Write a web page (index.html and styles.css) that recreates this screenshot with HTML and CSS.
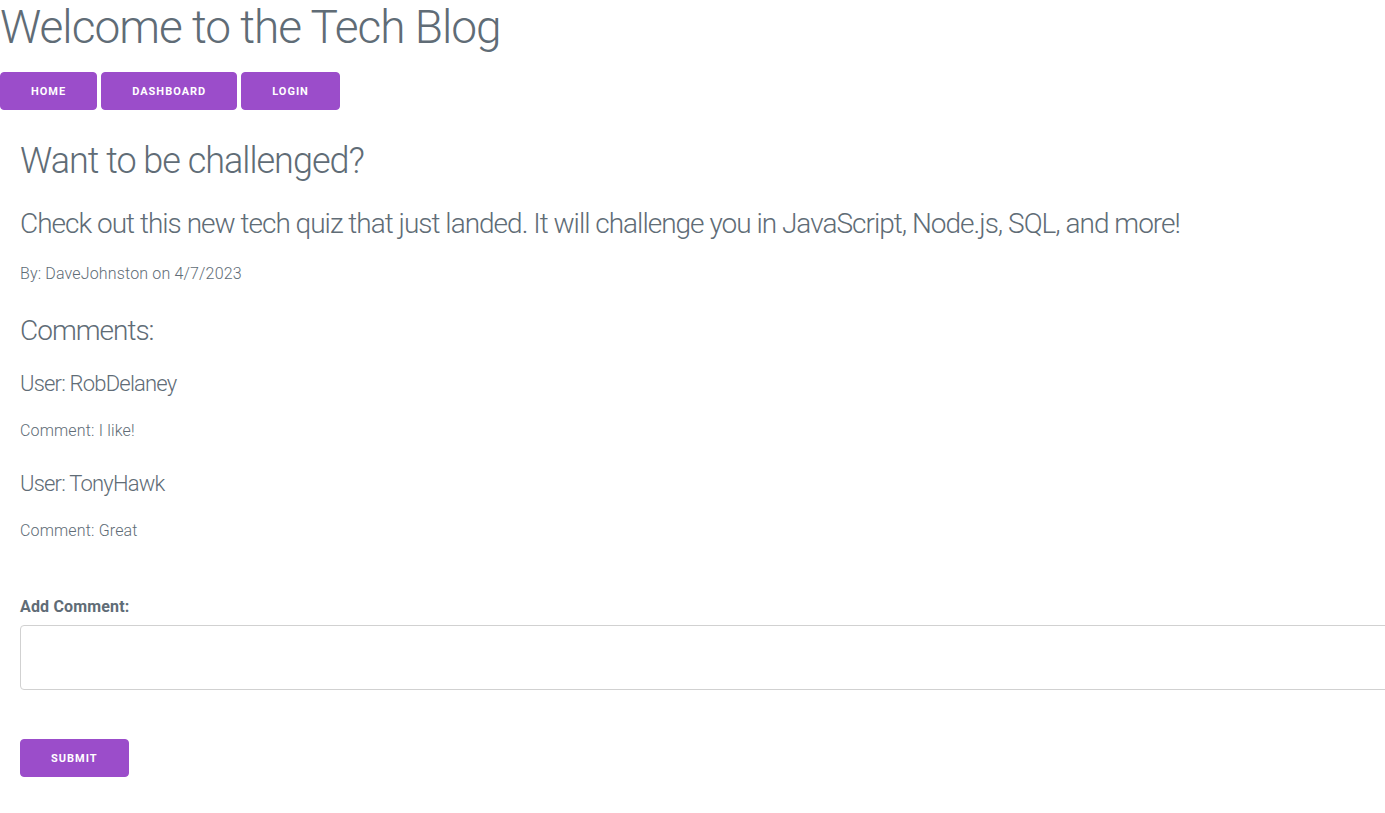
FILE: index.html
```html
<!DOCTYPE html>
<html lang="en">
<head>
<meta charset="utf-8">
<title>Tech Blog</title>
<link rel="stylesheet" href="styles.css">
</head>
<body>
<header class="site-header">
  <h1 class="site-title">Welcome to the Tech Blog</h1>
  <nav class="nav">
    <a class="button" href="#">Home</a>
    <a class="button" href="#">Dashboard</a>
    <a class="button" href="#">Login</a>
  </nav>
</header>
<main class="post">
  <h2 class="post-title">Want to be challenged?</h2>
  <p class="post-body">Check out this new tech quiz that just landed. It will challenge you in JavaScript, Node.js, SQL, and more!</p>
  <p class="post-meta">By: DaveJohnston on 4/7/2023</p>
  <h3 class="comments-heading">Comments:</h3>
  <div class="comment">
    <h4 class="comment-user">User: RobDelaney</h4>
    <p class="comment-text">Comment: I like!</p>
  </div>
  <div class="comment">
    <h4 class="comment-user">User: TonyHawk</h4>
    <p class="comment-text">Comment: Great</p>
  </div>
  <form class="comment-form">
    <label class="comment-label" for="comment">Add Comment:</label>
    <textarea class="comment-input" id="comment"></textarea>
    <button class="button submit" type="submit">Submit</button>
  </form>
</main>
</body>
</html>
```

FILE: styles.css
```css
html { overflow-x: hidden; }
body {
  margin: 0;
  font-family: Roboto, "Liberation Sans", sans-serif;
  font-weight: 300;
  color: #606c76;
  font-size: 16px;
  letter-spacing: 0.01em;
  background: #fff;
}
.site-title {
  margin: 0;
  font-size: 46px;
  font-weight: 300;
  letter-spacing: -1px;
  line-height: 55px;
}
.nav {
  display: flex;
  gap: 4px;
  margin-top: 17px;
}
.button {
  display: inline-flex;
  align-items: center;
  justify-content: center;
  height: 38px;
  padding: 0 30px;
  background: #9b4dca;
  border: 1px solid #9b4dca;
  border-radius: 4px;
  color: #fff;
  font-family: Roboto, "Liberation Sans", sans-serif;
  font-size: 11px;
  font-weight: 700;
  letter-spacing: 1px;
  text-transform: uppercase;
  text-decoration: none;
  box-sizing: border-box;
  cursor: pointer;
}
.post {
  padding: 0 0 0 20px;
}
.post-title {
  margin: 28px 0 0;
  font-size: 36px;
  font-weight: 300;
  letter-spacing: -1px;
  line-height: 46px;
}
.post-body {
  margin: 22px 0 0;
  font-size: 28px;
  letter-spacing: -1px;
  line-height: 36px;
}
.post-meta {
  margin: 19px 0 0;
  font-size: 16px;
  line-height: 26px;
}
.comments-heading {
  margin: 26px 0 0;
  font-size: 28px;
  font-weight: 300;
  letter-spacing: -1px;
  line-height: 36px;
}
.comment-user {
  margin: 20px 0 0;
  font-size: 22px;
  font-weight: 300;
  letter-spacing: -0.8px;
  line-height: 30px;
}
.comment + .comment .comment-user {
  margin-top: 25px;
}
.comment-text {
  margin: 19px 0 0;
  font-size: 16px;
  line-height: 26px;
}
.comment-form {
  display: flex;
  flex-direction: column;
  align-items: flex-start;
  margin-top: 50px;
}
.comment-label {
  font-size: 16px;
  font-weight: 700;
  line-height: 26px;
  margin-bottom: 5px;
}
.comment-input {
  width: calc(100% + 20px);
  height: 65px;
  box-sizing: border-box;
  border: 1px solid #d1d1d1;
  border-radius: 4px;
  padding: 6px 10px;
  resize: none;
  font-family: inherit;
  margin-bottom: 49px;
}
.submit {
  font-size: 11px;
}
```
